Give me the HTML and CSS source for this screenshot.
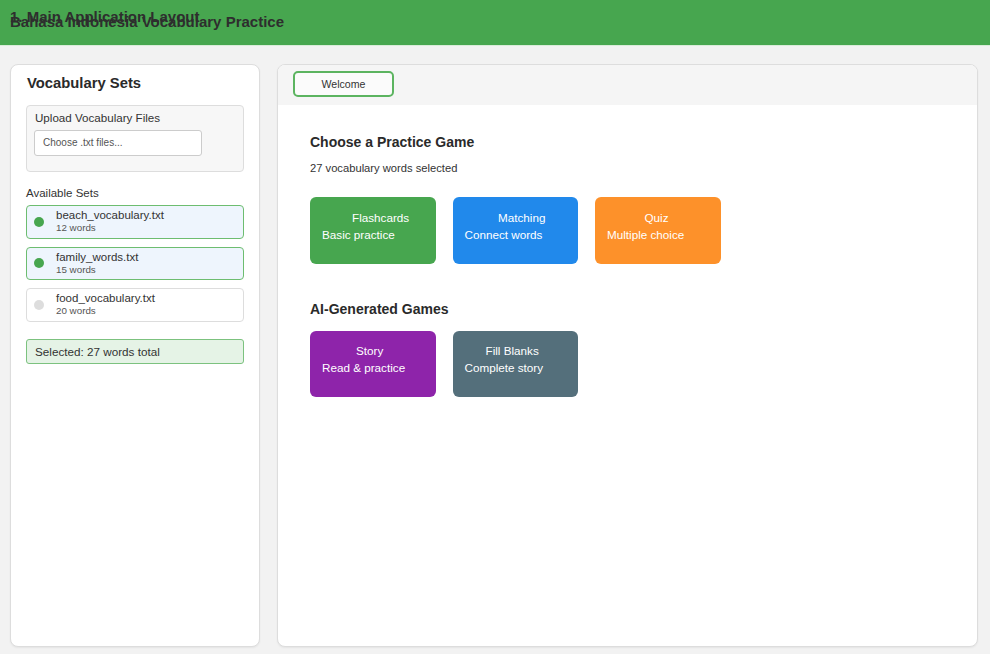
FILE: index.html
```html
<!DOCTYPE html>
<html lang="en">
<head>
<meta charset="utf-8">
<title>Bahasa Indonesia Vocabulary Practice</title>
<link rel="stylesheet" href="styles.css">
</head>
<body>
<header class="app-header">
  <div class="layout-label">1. Main Application Layout</div>
  <h1 class="app-title">Bahasa Indonesia Vocabulary Practice</h1>
</header>
<div class="app-body">
  <aside class="sidebar">
    <h2 class="sidebar-title">Vocabulary Sets</h2>
    <div class="upload-box">
      <div class="upload-label">Upload Vocabulary Files</div>
      <div class="file-input">Choose .txt files...</div>
    </div>
    <div class="sets-label">Available Sets</div>
    <ul class="set-list">
      <li class="set-item selected">
        <span class="dot"></span>
        <div class="set-info"><div class="set-name">beach_vocabulary.txt</div><div class="set-count">12 words</div></div>
      </li>
      <li class="set-item selected">
        <span class="dot"></span>
        <div class="set-info"><div class="set-name">family_words.txt</div><div class="set-count">15 words</div></div>
      </li>
      <li class="set-item">
        <span class="dot"></span>
        <div class="set-info"><div class="set-name">food_vocabulary.txt</div><div class="set-count">20 words</div></div>
      </li>
    </ul>
    <div class="selected-summary">Selected: 27 words total</div>
  </aside>
  <main class="main-panel">
    <div class="tab-bar">
      <div class="tab active">Welcome</div>
    </div>
    <div class="content">
      <h2 class="section-title">Choose a Practice Game</h2>
      <p class="selected-count">27 vocabulary words selected</p>
      <div class="game-grid">
        <div class="game-card green"><div class="game-title t-flash">Flashcards</div><div class="game-desc">Basic practice</div></div>
        <div class="game-card blue"><div class="game-title t-match">Matching</div><div class="game-desc">Connect words</div></div>
        <div class="game-card orange"><div class="game-title t-quiz">Quiz</div><div class="game-desc">Multiple choice</div></div>
      </div>
      <h2 class="section-title ai-title">AI-Generated Games</h2>
      <div class="game-grid">
        <div class="game-card purple"><div class="game-title t-story">Story</div><div class="game-desc">Read &amp; practice</div></div>
        <div class="game-card slate"><div class="game-title t-fill">Fill Blanks</div><div class="game-desc">Complete story</div></div>
      </div>
    </div>
  </main>
</div>
</body>
</html>
```

FILE: styles.css
```css
* { box-sizing: border-box; }
html, body { height: 100%; }
body {
  margin: 0;
  background: #f2f2f2;
  font-family: "Liberation Sans", Arial, sans-serif;
  color: #333;
  display: flex;
  flex-direction: column;
}
.app-header {
  position: relative;
  height: 46px;
  background: #47a64f;
  border-bottom: 1px solid #d9ecd9;
  padding: 13px 10px 0;
}
.layout-label {
  position: absolute;
  left: 10px;
  top: 8px;
  font-size: 15px;
  font-weight: bold;
  color: #2e2e2e;
}
.app-title {
  margin: 0;
  font-size: 15px;
  font-weight: bold;
  color: #2e2e2e;
}
.app-body {
  flex: 1;
  display: flex;
  gap: 17px;
  padding: 18px 12px 7px 10px;
  min-height: 0;
}
.sidebar {
  width: 250px;
  flex-shrink: 0;
  background: #fff;
  border: 1px solid #ddd;
  border-radius: 8px;
  box-shadow: 0 1px 2px rgba(0,0,0,0.06);
  padding: 10px 15px 8px;
}
.sidebar-title {
  margin: 0 0 13px 1px;
  font-size: 14.8px;
  font-weight: bold;
  line-height: 17px;
  color: #2a2a2a;
}
.upload-box {
  background: #f7f7f7;
  border: 1px solid #ddd;
  border-radius: 4px;
  padding: 5px 8px 15px 7px;
}
.upload-label {
  font-size: 11.6px;
  line-height: 14px;
  margin-bottom: 5px;
  padding-left: 1px;
}
.file-input {
  width: 168px;
  height: 26px;
  background: #fff;
  border: 1px solid #ccc;
  border-radius: 3px;
  font-size: 10px;
  line-height: 24px;
  padding-left: 8px;
  color: #555;
}
.sets-label {
  font-size: 11.5px;
  line-height: 14px;
  margin-top: 14px;
  margin-bottom: 5px;
}
.set-list {
  list-style: none;
  margin: 0;
  padding: 0;
  display: flex;
  flex-direction: column;
  gap: 8px;
}
.set-item {
  display: flex;
  align-items: center;
  gap: 12px;
  height: 33.5px;
  padding: 0 7px;
  background: #fff;
  border: 1px solid #ddd;
  border-radius: 4px;
}
.set-item.selected {
  background: #eef5fd;
  border-color: #6dbd70;
}
.dot {
  width: 10px;
  height: 10px;
  border-radius: 50%;
  background: #ddd;
  flex-shrink: 0;
}
.set-item.selected .dot { background: #47a64f; }
.set-info { margin-top: -1px; }
.set-name {
  font-size: 11.5px;
  line-height: 13px;
}
.set-count {
  font-size: 9.8px;
  line-height: 11px;
  color: #555;
}
.selected-summary {
  margin-top: 17.5px;
  height: 25px;
  background: #e5f3e6;
  border: 1px solid #7cc27f;
  border-radius: 3px;
  padding: 0 8px;
  font-size: 11.7px;
  line-height: 23px;
}
.main-panel {
  flex: 1;
  background: #fff;
  border: 1px solid #ddd;
  border-radius: 8px;
  box-shadow: 0 1px 2px rgba(0,0,0,0.06);
  overflow: hidden;
  display: flex;
  flex-direction: column;
}
.tab-bar {
  height: 40px;
  background: #f5f5f5;
  padding: 6px 15px 0;
  display: flex;
}
.tab {
  width: 101px;
  height: 26px;
  border: 2px solid #5cb460;
  border-radius: 5px;
  background: #fbfbfb;
  font-size: 10.6px;
  line-height: 22px;
  text-align: center;
  color: #333;
}
.content {
  padding: 29px 32px;
}
.section-title {
  margin: 0;
  font-size: 14px;
  font-weight: bold;
  line-height: 16px;
  color: #2a2a2a;
}
.selected-count {
  margin: 11px 0 22px;
  font-size: 11.2px;
  line-height: 14px;
}
.game-grid {
  display: flex;
  gap: 17px;
}
.game-card {
  width: 125.5px;
  height: 66.5px;
  border-radius: 6px;
  padding: 11.5px 12px 0;
  color: #fff;
  font-size: 11.7px;
  line-height: 17px;
}
.green { background: #47a64f; }
.blue { background: #2189eb; }
.orange { background: #fd912a; }
.purple { background: #8e24aa; }
.slate { background: #546f7b; }
.t-flash { padding-left: 30px; }
.t-match { padding-left: 33.5px; }
.t-quiz { padding-left: 37.5px; }
.t-story { padding-left: 34px; }
.t-fill { padding-left: 21px; }
.ai-title { margin-top: 37px; margin-bottom: 14px; }
```
